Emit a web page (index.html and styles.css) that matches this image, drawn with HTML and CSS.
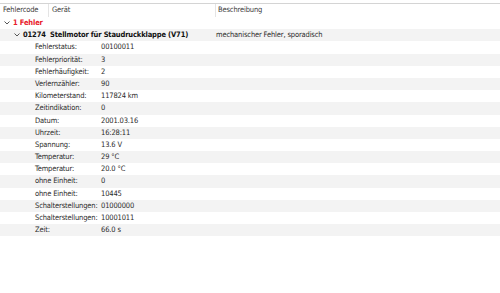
FILE: index.html
```
<!DOCTYPE html>
<html lang="de">
<head>
<meta charset="utf-8">
<link rel="stylesheet" href="styles.css">
</head>
<body>
<div class="tree">
  <div class="header">
    <div class="hcell c1">Fehlercode</div>
    <div class="hcell c2">Gerät</div>
    <div class="hcell c3">Beschreibung</div>
  </div>
  <div class="row group">
    <span class="chev"><svg width="6" height="4" viewBox="0 0 6 4"><path d="M0.5 0.5 L3 3 L5.5 0.5" fill="none" stroke="#555" stroke-width="1"/></svg></span>
    <span class="red">1 Fehler</span>
  </div>
  <div class="row fault stripe">
    <div class="c1"><span class="chev"><svg width="6" height="4" viewBox="0 0 6 4"><path d="M0.5 0.5 L3 3 L5.5 0.5" fill="none" stroke="#555" stroke-width="1"/></svg></span><b>01274</b></div>
    <div class="c2"><b>Stellmotor für Staudruckklappe (V71)</b></div>
    <div class="c3">mechanischer Fehler, sporadisch</div>
  </div>
  <div class="row detail"><span class="lbl">Fehlerstatus:</span><span class="val">00100011</span></div>
  <div class="row detail stripe"><span class="lbl">Fehlerpriorität:</span><span class="val">3</span></div>
  <div class="row detail"><span class="lbl">Fehlerhäufigkeit:</span><span class="val">2</span></div>
  <div class="row detail stripe"><span class="lbl">Verlernzähler:</span><span class="val">90</span></div>
  <div class="row detail"><span class="lbl">Kilometerstand:</span><span class="val">117824 km</span></div>
  <div class="row detail stripe"><span class="lbl">Zeitindikation:</span><span class="val">0</span></div>
  <div class="row detail"><span class="lbl">Datum:</span><span class="val">2001.03.16</span></div>
  <div class="row detail stripe"><span class="lbl">Uhrzeit:</span><span class="val">16:28:11</span></div>
  <div class="row detail"><span class="lbl">Spannung:</span><span class="val">13.6 V</span></div>
  <div class="row detail stripe"><span class="lbl">Temperatur:</span><span class="val">29 °C</span></div>
  <div class="row detail"><span class="lbl">Temperatur:</span><span class="val">20.0 °C</span></div>
  <div class="row detail stripe"><span class="lbl">ohne Einheit:</span><span class="val">0</span></div>
  <div class="row detail"><span class="lbl">ohne Einheit:</span><span class="val">10445</span></div>
  <div class="row detail stripe"><span class="lbl">Schalterstellungen:</span><span class="val">01000000</span></div>
  <div class="row detail"><span class="lbl">Schalterstellungen:</span><span class="val">10001011</span></div>
  <div class="row detail stripe"><span class="lbl">Zeit:</span><span class="val">66.0 s</span></div>
</div>
</body>
</html>
```

FILE: styles.css
```
html, body {
  margin: 0;
  padding: 0;
  background: #fff;
}
body {
  font-family: "DejaVu Sans Condensed", "DejaVu Sans", sans-serif;
  font-stretch: condensed;
  font-size: 7.5px;
  letter-spacing: -0.15px;
  color: #2a2a2a;
  width: 500px;
  height: 293px;
  overflow: hidden;
}
.tree {
  display: flex;
  flex-direction: column;
}
.header {
  display: flex;
  height: 13px;
  margin-top: 3px;
  border-top: 1px solid #d4d4d4;
  color: #3a3a3a;
}
.hcell {
  padding-left: 3px;
  line-height: 11px;
}
.header .c1 { width: 45px; border-right: 1px solid #e4e4e4; }
.header .c2 { width: 163px; border-right: 1px solid #e4e4e4; }
.header .c3 { flex: 1; padding-left: 2px; }
.row {
  display: flex;
  align-items: center;
  height: 12.2px;
  line-height: 12.2px;
  white-space: nowrap;
}
.stripe { background: #f3f3f3; }
.group { padding-left: 4px; }
.chev {
  display: inline-flex;
  width: 9px;
  align-items: center;
}
.red { color: #e8202a; font-weight: bold; }
.fault { color: #111; }
.fault .c1 {
  width: 50px;
  padding-left: 14px;
  box-sizing: border-box;
  display: flex;
  align-items: center;
}
.fault .c2 { width: 166px; }
.fault .c3 { flex: 1; color: #2a2a2a; }
.detail .lbl { padding-left: 35px; width: 66px; }
```
